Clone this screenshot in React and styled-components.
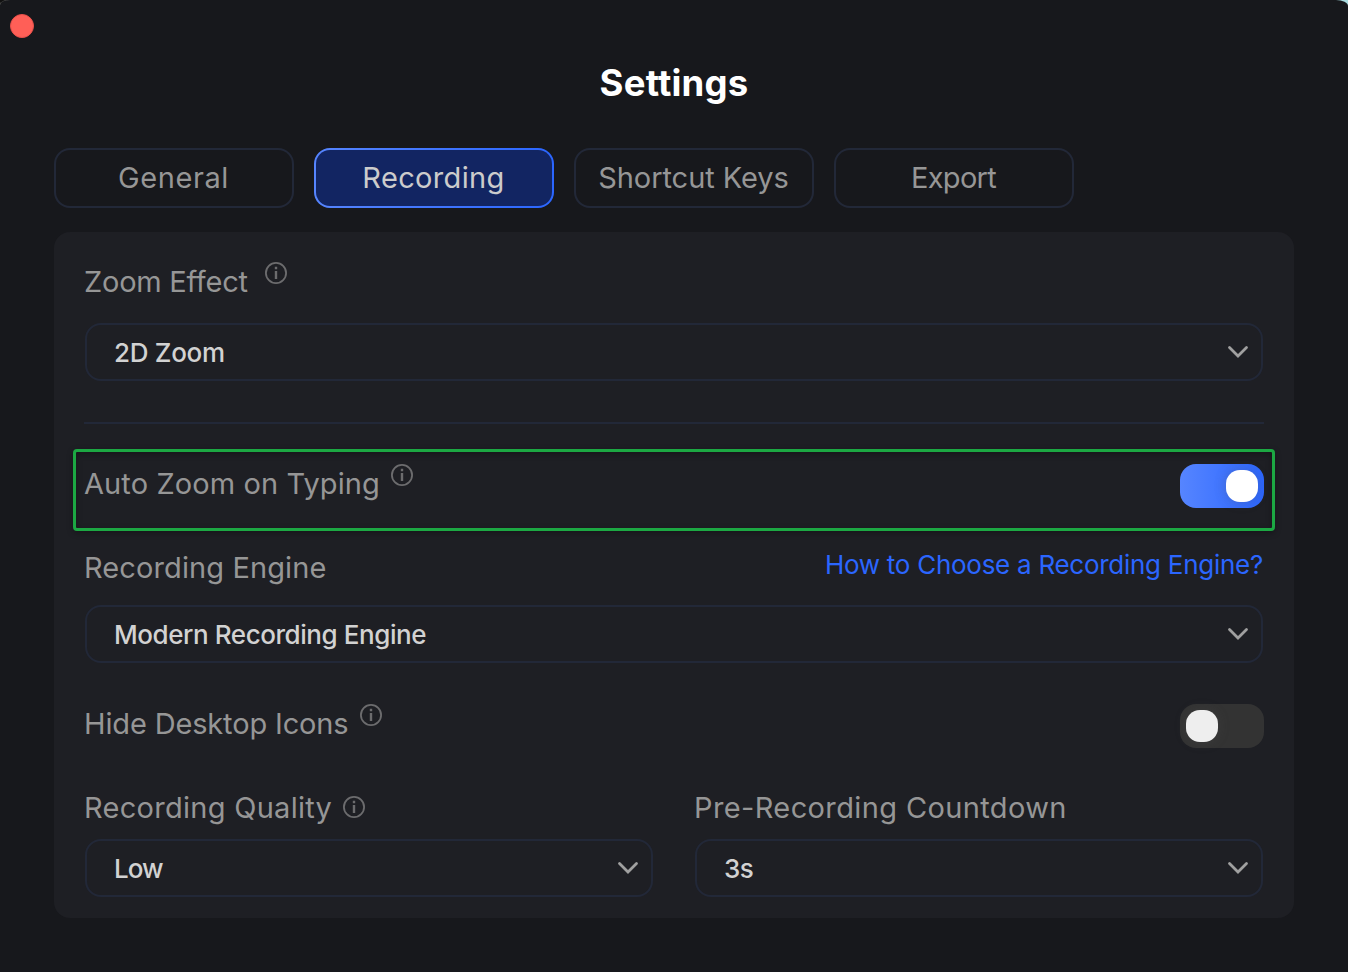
import React, { useState } from 'react';
import styled, { createGlobalStyle } from 'styled-components';

const GlobalStyle = createGlobalStyle`
  * {
    box-sizing: border-box;
  }
  body {
    margin: 0;
    background: linear-gradient(150deg, #111 2px, #8a8a86 4px) no-repeat 0 0 / 12px 6px, #a9dbe0;
    font-family: Inter, 'Liberation Sans', sans-serif;
  }
`;

const Window = styled.main`
  height: 972px;
  padding: 14px 54px 0;
  border-radius: 10px 12px 0 0 / 5px 6px 0 0;
  background: #17181c;
  overflow: hidden;
`;

const CloseButton = styled.button`
  display: block;
  width: 24px;
  height: 24px;
  margin-left: -44px;
  padding: 0;
  border: 1px solid #e9504a;
  border-radius: 50%;
  background: #ff5f57;
  cursor: pointer;
`;

const Title = styled.h1`
  margin: 21px 0 0;
  height: 48px;
  line-height: 48px;
  font-size: 36.5px;
  font-weight: 700;
  letter-spacing: 0.2px;
  color: #fff;
  text-align: center;
`;

const TabBar = styled.nav`
  display: flex;
  gap: 20px;
  margin-top: 41px;
`;

const Tab = styled.button`
  width: 240px;
  height: 60px;
  padding: 0 1px 2px 0;
  border: 2px solid transparent;
  border-radius: 16px;
  background: ${(props) =>
    props.$active
      ? 'linear-gradient(#122562, #122562) padding-box, linear-gradient(90deg, #5685ff, #2b66ff) border-box'
      : 'linear-gradient(#17181c, #17181c) padding-box, linear-gradient(#222838, #222838) border-box'};
  color: ${(props) => (props.$active ? '#cccccc' : '#969696')};
  font-family: inherit;
  font-size: 29px;
  letter-spacing: ${(props) => props.$tracking || 0}px;
  cursor: pointer;
`;

const Panel = styled.section`
  display: flex;
  flex-direction: column;
  height: 686px;
  margin-top: 24px;
  padding: 28px 30px 0;
  border-radius: 16px;
  background: #1e1f24;
`;

const Row = styled.div`
  display: flex;
  justify-content: space-between;
  align-items: flex-start;
  height: 44px;
  margin-top: ${(props) => props.$top || 0}px;
`;

const HighlightRow = styled(Row)`
  height: 82px;
  margin-left: -11px;
  margin-right: -11px;
  padding: 12px 8px 0;
  border: 3px solid #1ca843;
  border-radius: 4px;
  box-shadow: 0 2px 6px rgba(0, 0, 0, 0.3), inset 0 2px 6px rgba(0, 0, 0, 0.3);
`;

const Label = styled.div`
  display: flex;
  align-items: center;
  height: ${(props) => props.$height || 42}px;
  font-size: 29px;
  letter-spacing: ${(props) => props.$tracking || 0}px;
  color: #969696;
  white-space: nowrap;
`;

const InfoSvg = styled.svg`
  display: block;
  flex: none;
  width: 22px;
  height: 22px;
  margin-left: ${(props) => props.$gap}px;
  margin-bottom: ${(props) => props.$lift}px;
`;

const HelpLink = styled.a`
  height: 38px;
  margin-right: 1px;
  line-height: 38px;
  font-size: 26px;
  letter-spacing: -0.27px;
  color: #2b66ff;
  text-decoration: none;
`;

const SelectBox = styled.button`
  display: flex;
  flex: none;
  justify-content: space-between;
  align-items: center;
  height: 58px;
  margin: ${(props) => props.$top}px 1px 0;
  padding: 0 12px 0 27px;
  border: 2px solid #222838;
  border-radius: 16px;
  background: transparent;
  color: #d2d2d2;
  font-family: inherit;
  font-size: 26px;
  font-weight: 500;
  letter-spacing: ${(props) => props.$tracking || 0}px;
  cursor: pointer;
`;

const Divider = styled.hr`
  flex: none;
  width: 100%;
  height: 2px;
  margin: 41px 0 25px;
  border: none;
  background: #222838;
`;

const Columns = styled.div`
  display: grid;
  grid-template-columns: 1fr 1fr;
  gap: 40px;
  margin-top: 38px;
`;

const Field = styled.div`
  display: flex;
  flex-direction: column;
`;

const Switch = styled.button`
  display: flex;
  justify-content: ${(props) => (props.$on ? 'flex-end' : 'flex-start')};
  align-items: center;
  width: 84px;
  height: 44px;
  padding: 0 6px;
  border: none;
  border-radius: 16px;
  background: ${(props) =>
    props.$on ? 'linear-gradient(90deg, #5685ff, #2b66ff)' : '#333333'};
  cursor: pointer;
`;

const Knob = styled.span`
  width: 32px;
  height: 32px;
  border-radius: 14px;
  background: ${(props) => (props.$on ? '#fff' : '#eeeeee')};
  box-shadow: 0 0 12px rgba(80, 80, 80, 0.3);
`;

const InfoIcon = ({ gap, lift = 16 }) => (
  <InfoSvg $gap={gap} $lift={lift} viewBox="0 0 22 22" fill="none">
    <circle cx="11" cy="11" r="10.1" stroke="#6c6c6e" strokeWidth="1.8" />
    <path d="M11 9v8M11 4.700v2.500" stroke="#6c6c6e" strokeWidth="2.400" />
  </InfoSvg>
);

const Select = ({ value, top, tracking }) => (
  <SelectBox $top={top} $tracking={tracking}>
    {value}
    <svg width="22" height="14" viewBox="0 0 22 14" fill="none">
      <path
        d="M2.500 2.500 11 11l8.500-8.500"
        stroke="#a0a0a0"
        strokeWidth="2.800"
        strokeLinecap="round"
      />
    </svg>
  </SelectBox>
);

const Toggle = ({ on, onClick }) => (
  <Switch $on={on} onClick={onClick}>
    <Knob $on={on} />
  </Switch>
);

const tabs = [
  { name: 'General', tracking: 0.6 },
  { name: 'Recording', tracking: 0.35 },
  { name: 'Shortcut Keys', tracking: -0.05 },
  { name: 'Export', tracking: -0.75 },
];

const App = () => {
  const [activeTab, setActiveTab] = useState('Recording');
  const [autoZoom, setAutoZoom] = useState(true);
  const [hideIcons, setHideIcons] = useState(false);

  return (
    <>
      <GlobalStyle />
      <Window>
        <CloseButton />
        <Title>Settings</Title>
        <TabBar>
          {tabs.map(({ name, tracking }) => (
            <Tab
              key={name}
              $active={name === activeTab}
              $tracking={tracking}
              onClick={() => setActiveTab(name)}
            >
              {name}
            </Tab>
          ))}
        </TabBar>
        <Panel>
          <Row>
            <Label $tracking={-0.25}>
              Zoom Effect
              <InfoIcon gap={17} />
            </Label>
          </Row>
          <Select value="2D Zoom" top={19} tracking={-0.3} />
          <Divider />
          <HighlightRow>
            <Label $height={38} $tracking={0.1}>
              Auto Zoom on Typing
              <InfoIcon gap={11} />
            </Label>
            <Toggle on={autoZoom} onClick={() => setAutoZoom(!autoZoom)} />
          </HighlightRow>
          <Row $top={15}>
            <Label $tracking={0.1}>Recording Engine</Label>
            <HelpLink href="#">How to Choose a Recording Engine?</HelpLink>
          </Row>
          <Select
            value="Modern Recording Engine"
            top={15}
            tracking={-0.43}
          />
          <Row $top={41}>
            <Label $height={38} $tracking={-0.15}>
              Hide Desktop Icons
              <InfoIcon gap={11.5} />
            </Label>
            <Toggle on={hideIcons} onClick={() => setHideIcons(!hideIcons)} />
          </Row>
          <Columns>
            <Field>
              <Label $tracking={0.28}>
                Recording Quality
                <InfoIcon gap={11} lift={0} />
              </Label>
              <Select value="Low" top={11} tracking={-1} />
            </Field>
            <Field>
              <Label $tracking={0.38}>Pre-Recording Countdown</Label>
              <Select value="3s" top={11} tracking={-0.6} />
            </Field>
          </Columns>
        </Panel>
      </Window>
    </>
  );
};

export default App;
